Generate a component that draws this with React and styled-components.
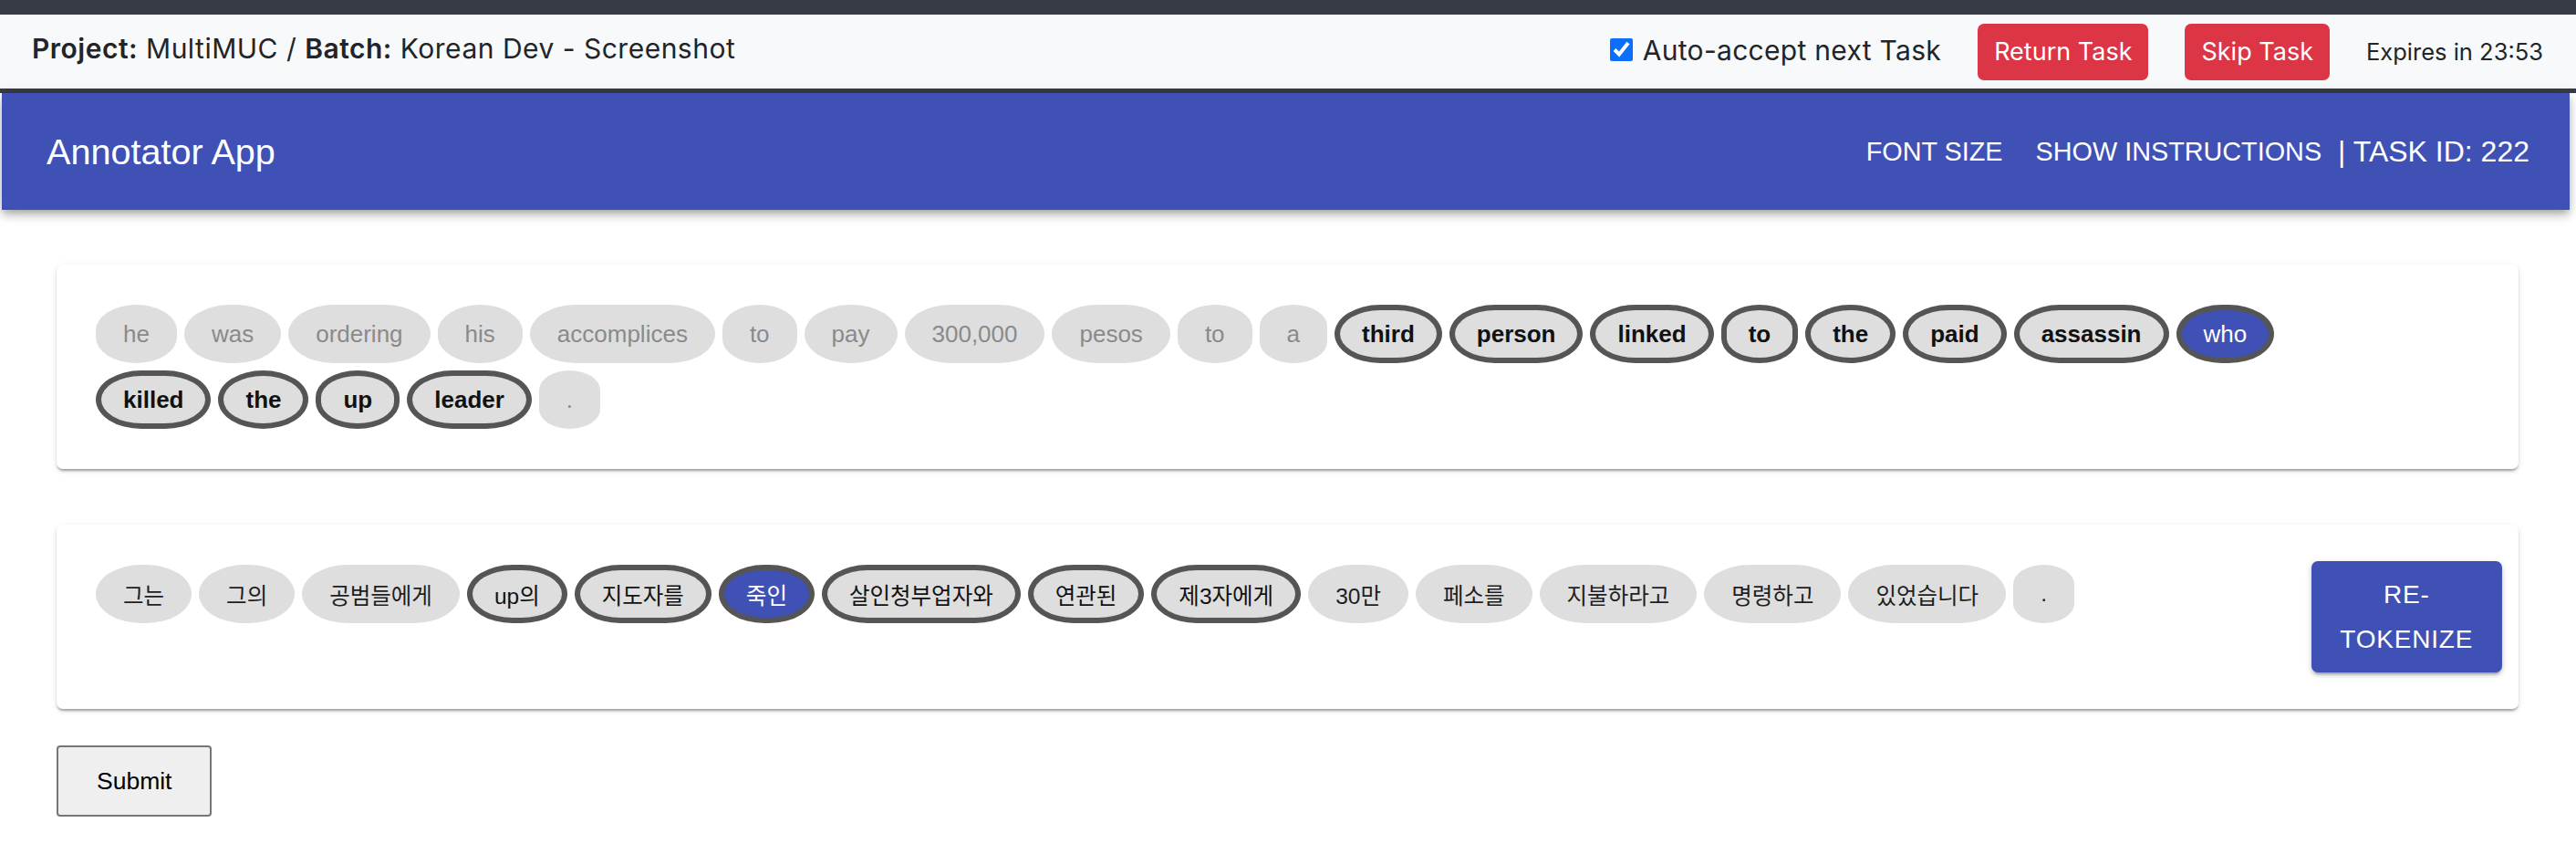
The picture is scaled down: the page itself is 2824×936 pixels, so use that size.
import styled, { createGlobalStyle } from "styled-components";
import { useState } from "react";

const GlobalStyle = createGlobalStyle`
  body {
    margin: 0;
    background: #fff;
    font-family: "Liberation Sans", Arial, sans-serif;
  }
`;

const TaskBar = styled.div`
  display: flex;
  align-items: center;
  justify-content: space-between;
  height: 81px;
  padding: 0 36px 0 35px;
  background: #f8f9fa;
  border-top: 16px solid #373b43;
  border-bottom: 5px solid #373b43;
  font-family: "Inter", "Liberation Sans", sans-serif;
  color: #212529;
`;

const ProjectTitle = styled.div`
  font-size: 30px;
  padding-bottom: 8px;
  letter-spacing: 0.5px;

  b {
    font-weight: 600;
  }
`;

const Controls = styled.div`
  display: flex;
  align-items: center;
  gap: 40px;
`;

const CheckLabel = styled.label`
  display: flex;
  align-items: center;
  gap: 11px;
  font-size: 30px;
  letter-spacing: 0.3px;
  padding-bottom: 4px;

  input {
    width: 25px;
    height: 25px;
    margin: 0;
    accent-color: #0b6efd;
  }
`;

const DangerButton = styled.button`
  height: 62px;
  padding: 0 18px;
  border: none;
  border-radius: 7px;
  background: #dc3545;
  color: #fff;
  font-family: "Inter", "Liberation Sans", sans-serif;
  font-size: 27px;
  cursor: pointer;
`;

const Expires = styled.span`
  font-size: 25.5px;
`;

const AppBar = styled.header`
  display: flex;
  align-items: center;
  justify-content: space-between;
  height: 128px;
  margin: 0 7px 0 2px;
  padding: 0 44px 0 49px;
  background: #3f51b5;
  color: #fff;
  box-shadow: 0 4px 7px -2px rgba(0, 0, 0, 0.2), 0 7px 9px 0 rgba(0, 0, 0, 0.14),
    0 2px 18px 0 rgba(0, 0, 0, 0.12);
`;

const AppTitle = styled.h1`
  margin: 0;
  font-size: 39.6px;
  font-weight: 400;
`;

const Nav = styled.nav`
  display: flex;
  align-items: center;
  font-size: 28.8px;
  text-transform: uppercase;
`;

const NavButton = styled.button`
  background: none;
  border: none;
  color: inherit;
  font: inherit;
  text-transform: inherit;
  padding: 0 18px;
  cursor: pointer;
`;

const TaskId = styled.span`
  font-size: 32px;
  white-space: pre;
`;

const Main = styled.main`
  display: flex;
  flex-direction: column;
  align-items: flex-start;
  padding: 60px 63px 40px 62px;
`;

const Card = styled.section`
  align-self: stretch;
  display: flex;
  align-items: flex-start;
  justify-content: space-between;
  margin-bottom: ${(p) => p.$gap || "0"};
  padding: 40px 18px 40px 39px;
  background: #fff;
  border-radius: 7px;
  box-shadow: 0 4px 3px -2px rgba(0, 0, 0, 0.2), 0 2px 2px 0 rgba(0, 0, 0, 0.14),
    0 2px 6px 0 rgba(0, 0, 0, 0.12);
`;

const TokenList = styled.div`
  display: flex;
  flex-wrap: wrap;
  width: 2440px;
  font-size: ${(p) => p.$size || "26px"};
`;

const Token = styled.span`
  display: inline-flex;
  align-items: center;
  box-sizing: border-box;
  height: 64px;
  margin: 4px;
  padding: 0 24px;
  border: 6px solid ${(p) => (p.$marked ? "#555" : "transparent")};
  border-radius: 50px / 32px;
  background: ${(p) => (p.$active ? "#3f51b5" : "#dedede")};
  color: ${(p) => (p.$active ? "#fff" : p.$marked ? "#111" : p.$muted ? "#8a8a8a" : "#1e1e1e")};
  font-family: "Liberation Sans", "Noto Sans CJK KR", sans-serif;
  font-weight: ${(p) => (p.$bold && p.$marked && !p.$active ? 700 : 400)};
  white-space: nowrap;
  cursor: pointer;
`;

const RetokenizeButton = styled.button`
  width: 210px;
  padding: 12px 24px;
  border: none;
  border-radius: 7px;
  background: #3f51b5;
  color: #fff;
  font-family: "Liberation Sans", sans-serif;
  font-size: 28px;
  line-height: 1.75;
  letter-spacing: 0.8px;
  text-transform: uppercase;
  box-shadow: 0 5px 2px -3px rgba(0, 0, 0, 0.2), 0 3px 4px 0 rgba(0, 0, 0, 0.14),
    0 2px 9px 0 rgba(0, 0, 0, 0.12);
  cursor: pointer;
`;

const SubmitButton = styled.button`
  height: 78px;
  padding: 0 42px;
  border: 2px solid #767676;
  border-radius: 4px;
  background: #efefef;
  color: #000;
  font-family: "Liberation Sans", sans-serif;
  font-size: 26.5px;
  cursor: pointer;
`;

// m = marked (bordered), a = active (blue)
const source = [
  ["he"], ["was"], ["ordering"], ["his"], ["accomplices"], ["to"], ["pay"],
  ["300,000"], ["pesos"], ["to"], ["a"],
  ["third", "m"], ["person", "m"], ["linked", "m"], ["to", "m"], ["the", "m"],
  ["paid", "m"], ["assassin", "m"], ["who", "a"],
  ["killed", "m"], ["the", "m"], ["up", "m"], ["leader", "m"], ["."],
];

const target = [
  ["그는"], ["그의"], ["공범들에게"], ["up의", "m"], ["지도자를", "m"], ["죽인", "a"],
  ["살인청부업자와", "m"], ["연관된", "m"], ["제3자에게", "m"], ["30만"], ["페소를"],
  ["지불하라고"], ["명령하고"], ["있었습니다"], ["."],
];

export default function App() {
  const [autoAccept, setAutoAccept] = useState(true);

  return (
    <>
      <GlobalStyle />
      <TaskBar>
        <ProjectTitle>
          <b>Project:</b> MultiMUC / <b>Batch:</b> Korean Dev - Screenshot
        </ProjectTitle>
        <Controls>
          <CheckLabel>
            <input
              type="checkbox"
              checked={autoAccept}
              onChange={(e) => setAutoAccept(e.target.checked)}
            />
            Auto-accept next Task
          </CheckLabel>
          <DangerButton>Return Task</DangerButton>
          <DangerButton>Skip Task</DangerButton>
          <Expires>Expires in 23:53</Expires>
        </Controls>
      </TaskBar>

      <AppBar>
        <AppTitle>Annotator App</AppTitle>
        <Nav>
          <NavButton>Font Size</NavButton>
          <NavButton>Show Instructions</NavButton>
          <TaskId>| TASK ID: 222</TaskId>
        </Nav>
      </AppBar>

      <Main>
        <Card $gap="61px">
          <TokenList>
            {source.map(([word, state], i) => (
              <Token
                key={i}
                $muted
                $bold
                $marked={state === "m" || state === "a"}
                $active={state === "a"}
              >
                {word}
              </Token>
            ))}
          </TokenList>
        </Card>

        <Card $gap="40px">
          <TokenList $size="24.5px">
            {target.map(([word, state], i) => (
              <Token
                key={i}
                $marked={state === "m" || state === "a"}
                $active={state === "a"}
              >
                {word}
              </Token>
            ))}
          </TokenList>
          <RetokenizeButton>Re-tokenize</RetokenizeButton>
        </Card>

        <SubmitButton>Submit</SubmitButton>
      </Main>
    </>
  );
}
